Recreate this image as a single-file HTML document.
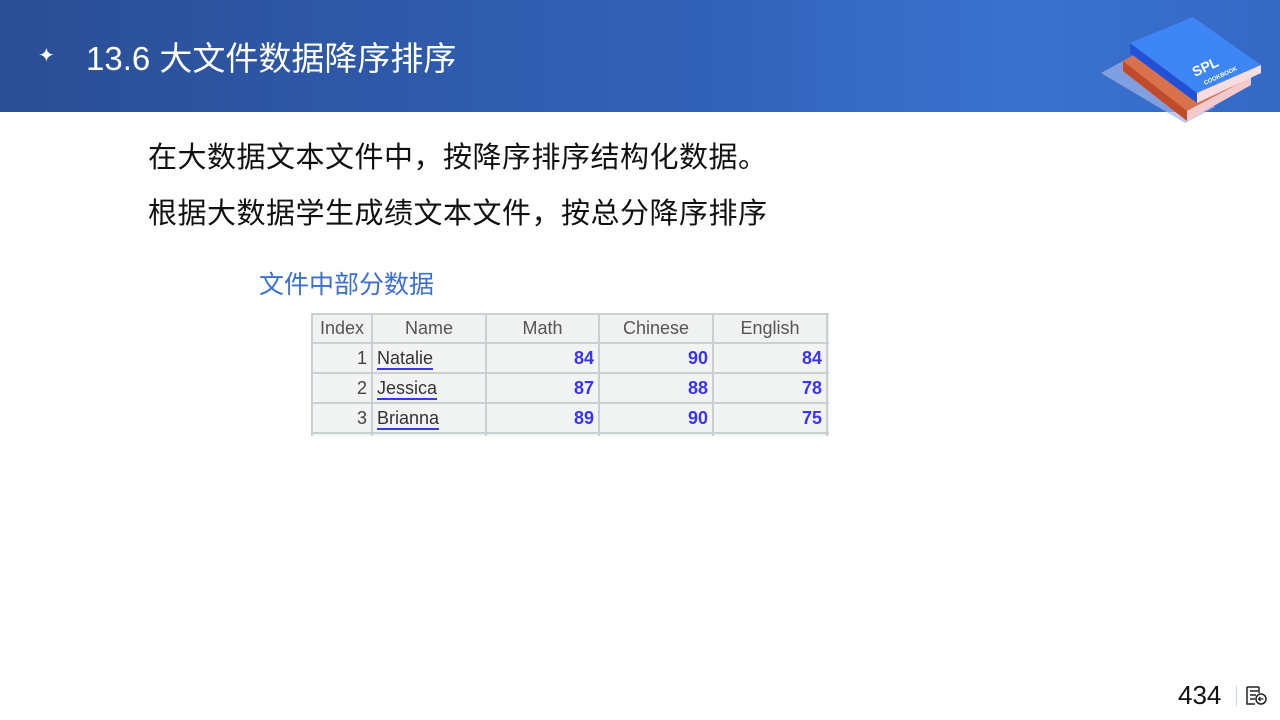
<!DOCTYPE html>
<html><head><meta charset="utf-8"><style>
body{margin:0;width:1280px;height:720px;overflow:hidden;background:#fff;position:relative;font-family:"Liberation Sans","Noto Sans CJK SC",sans-serif}
.hdr{position:absolute;left:0;top:0;width:1280px;height:112px;background:linear-gradient(90deg,#2a4e95 0%,#3262b8 55%,#3a72d0 80%,#3469c4 100%)}
.t{position:absolute;color:#fff;font-size:33px;left:86px;top:32px;white-space:nowrap}
.star{position:absolute;left:38px;top:43px;color:#fff;font-size:20px}
.p{position:absolute;left:148px;font-size:29px;color:#111;white-space:nowrap;letter-spacing:0.5px}
.cap{position:absolute;left:259px;top:265px;font-size:25px;color:#3b6fd0;white-space:nowrap}
table{position:absolute;border-collapse:collapse;table-layout:fixed;font-size:18px;background:#f2f3f3}
td{border:2px solid #c9cfd3;height:28px;padding:0 4px;color:#222;overflow:hidden}
th{border:2px solid #c9cfd3;height:27px;font-weight:normal;color:#555;background:#f0f1f1;padding:0}
td.n{color:#3a35ee;text-align:right;font-weight:bold}
td.i{text-align:right;color:#444}
u{text-decoration:none;border-bottom:2px solid #3a35ee;color:#333}
.pg{position:absolute;left:1178px;top:680px;font-size:26px;color:#111}
</style></head><body>
<div class="hdr"></div>
<div class="star">✦</div>
<div class="t">13.6 大文件数据降序排序</div>
<svg style="position:absolute;left:1095px;top:15px" width="170" height="110" viewBox="0 0 170 110">
<polygon points="6,58 50,34 120,92 90,108" fill="#9fb3e8" opacity="0.7"/>
<polygon points="28,46 92,14 156,62 92,96" fill="#d8714c"/>
<polygon points="28,46 28,56 92,106 92,96" fill="#c04a2a"/>
<polygon points="92,96 156,62 156,70 92,106" fill="#f7c9cc"/>
<polygon points="35,28 98,2 166,50 102,78" fill="#3e86f5"/>
<polygon points="35,28 35,38 102,88 102,78" fill="#2251d8"/>
<polygon points="102,78 166,50 166,58 102,88" fill="#f8dde0"/>
<text x="100" y="62" fill="#fff" font-size="14" font-weight="bold" transform="rotate(-25 100 62)">SPL</text>
<text x="110" y="70" fill="#fff" font-size="6" font-weight="bold" transform="rotate(-25 110 70)">COOKBOOK</text>
</svg>
<div class="p" style="top:134px">在大数据文本文件中，按降序排序结构化数据。</div>
<div class="p" style="top:190px">根据大数据学生成绩文本文件，按总分降序排序</div>
<div class="cap">文件中部分数据</div>
<div style="position:absolute;left:311px;top:313px;width:518px;height:123px;overflow:hidden">
<table style="left:0;top:0;width:575px">
<colgroup><col style="width:60px"><col style="width:114px"><col style="width:113px"><col style="width:114px"><col style="width:114px"><col style="width:60px"></colgroup>
<tr><th>Index</th><th>Name</th><th>Math</th><th>Chinese</th><th>English</th><th></th></tr>
<tr><td class="i">1</td><td><u>Natalie</u></td><td class="n">84</td><td class="n">90</td><td class="n">84</td><td></td></tr>
<tr><td class="i">2</td><td><u>Jessica</u></td><td class="n">87</td><td class="n">88</td><td class="n">78</td><td></td></tr>
<tr><td class="i">3</td><td><u>Brianna</u></td><td class="n">89</td><td class="n">90</td><td class="n">75</td><td></td></tr>
<tr><td class="i">&nbsp;</td><td></td><td></td><td></td><td></td><td></td></tr>
</table></div>
<div class="pg">434</div>
<div style="position:absolute;left:1236px;top:686px;width:1px;height:20px;background:#c8d4ea"></div>
<svg style="position:absolute;left:1246px;top:686px" width="22" height="20" viewBox="0 0 22 20">
<path d="M1 1h12M1 1v17h8M4 5h8M4 9h6M4 13h5M13 1v6" stroke="#222" stroke-width="1.5" fill="none"/>
<circle cx="15" cy="13" r="5" stroke="#222" stroke-width="1.5" fill="#fff"/>
<path d="M17.5 13h-5M14.5 11l-2 2 2 2" stroke="#222" stroke-width="1.3" fill="none"/>
</svg>
</body></html>
